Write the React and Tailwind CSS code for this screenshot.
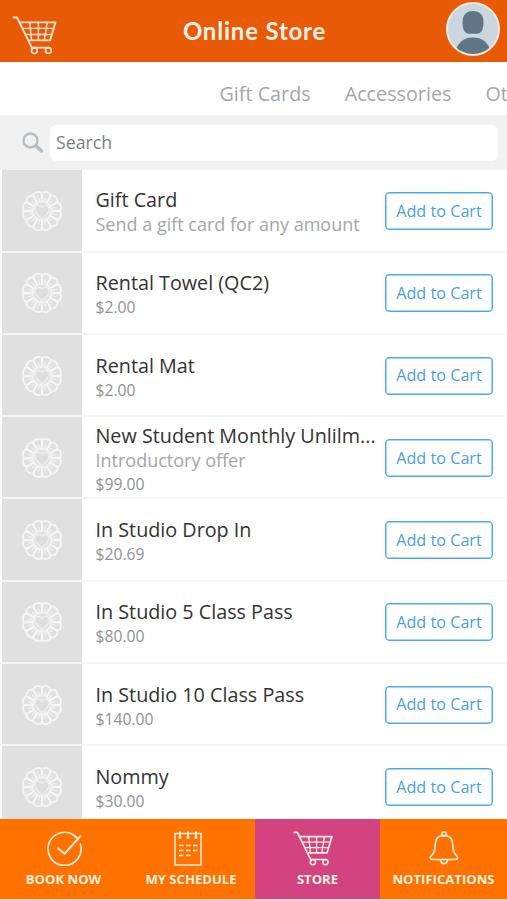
import React from 'react';

const tabs = ['Gift Cards', 'Accessories', 'Ot'];

const products = [
  { name: 'Gift Card', note: 'Send a gift card for any amount' },
  { name: 'Rental Towel (QC2)', price: '$2.00' },
  { name: 'Rental Mat', price: '$2.00' },
  { name: 'New Student Monthly Unlilm...', note: 'Introductory offer', price: '$99.00' },
  { name: 'In Studio Drop In', price: '$20.69' },
  { name: 'In Studio 5 Class Pass', price: '$80.00' },
  { name: 'In Studio 10 Class Pass', price: '$140.00' },
  { name: 'Nommy', price: '$30.00' },
];

const petals = [15, 45, 75, 105, 135, 165, 195, 225, 255, 285, 315, 345];

const CartIcon = ({ className }) => (
  <svg viewBox="0 0 46 40" className={className} fill="none" stroke="currentColor" strokeLinecap="round" strokeLinejoin="round">
    <path strokeWidth="1.9" d="M1 1.500h3.500L20.500 34M7.500 6.500H44L38.500 25H17" />
    <path strokeWidth="1.5" d="M11 12.700H42M13.500 18.900H40M17.500 6.500l2 18.500M26.500 6.500V25M35.500 6.500L32.500 25" />
    <path strokeWidth="1.7" d="M20.500 32.500H37" />
    <circle cx="22.300" cy="35.500" r="3" strokeWidth="1.700" />
    <circle cx="36.700" cy="35.500" r="3" strokeWidth="1.700" />
  </svg>
);

const BookIcon = ({ className }) => (
  <svg viewBox="0 0 36 36" className={className} fill="none" stroke="currentColor" strokeWidth="1.7" strokeLinecap="round" strokeLinejoin="round">
    <path d="M28.500 5A17 17 0 1 0 34.300 13.500" />
    <path strokeWidth="2" d="M11.500 18l6.500 5.500L34.500 5M28.500 5L30.500 7" />
  </svg>
);

const ScheduleIcon = ({ className }) => (
  <svg viewBox="0 0 28 35" className={className} fill="none" stroke="currentColor" strokeWidth="1.5">
    <path d="M1 2.500h26v31.500H1z" />
    <path strokeWidth="2" strokeLinecap="round" d="M6 1.200v5M14 1.200v5M22 1.200v5" />
    <path strokeWidth="3" strokeLinecap="round" d="M6 6.200v.2M14 6.200v.2M22 6.200v.2" />
    <path strokeWidth="1.700" d="M5 14.500h4.500M12 14.500h4.500M19 14.500h4.500M5 19.500h4.500M12 19.500h4.500M19 19.500h4.500M5 24.500h4.500M12 24.500h4.500" />
  </svg>
);

const BellIcon = ({ className }) => (
  <svg viewBox="0 0 30 35" className={className} fill="none" stroke="currentColor" strokeWidth="1.6" strokeLinejoin="round">
    <path d="M15 4.500C9 4.500 6.500 8 6.300 13C6 20 5 22.500 1.500 25.500C.8 27.500 2 28.500 4 28.500H26C28 28.500 29.200 27.500 28.500 25.500C25 22.500 24 20 23.700 13C23.500 8 21 4.500 15 4.500Z" />
    <circle cx="15" cy="3" r="2.200" />
    <path d="M11.300 28.500a3.800 5.300 0 0 0 7.400 0" />
  </svg>
);

const FlowerLogo = () => (
  <svg viewBox="-20.500 -20.500 41 41" className="mt-px h-[42px] w-[42px] text-[#f6f6f6]" fill="none" stroke="currentColor">
    {petals.map((angle) => (
      <g key={angle} transform={`rotate(${angle})`}>
        <path d="M-2.200 -9L-4.500 -17A5.500 5 0 0 1 4.500 -17L2.200 -9" strokeWidth="1.800" />
        <path d="M0 -9.500V-13.500" strokeWidth="1.100" />
      </g>
    ))}
    <circle r="9" strokeWidth="2" strokeOpacity=".75" />
    <path fill="#dedede" strokeWidth="1.300" strokeOpacity=".7" d="M0 7.500C-3 5-7 1.500-7-1.800C-7-5.500-2.500-6.800 0-3.500C2.500-6.800 7-5.500 7-1.800C7 1.500 3 5 0 7.500Z" />
  </svg>
);

const Avatar = () => (
  <div className="h-[54px] w-[54px] overflow-hidden rounded-full border-2 border-[#f5e9e4] bg-[#cbd6df]">
    <svg viewBox="0 0 50 50" className="h-full w-full" fill="#607685">
      <path d="M25 7C18 7 14.500 11.500 14.500 18C14.500 26 17 29.800 21 29.800H29C33 29.800 35.500 26 35.500 18C35.500 11.500 32 7 25 7Z" />
      <path d="M7 48C10 38 16 33.500 25 33.500S40 38 43 48V52H7Z" />
    </svg>
  </div>
);

const ProductRow = ({ name, note, price }) => (
  <li className="flex h-[82.250px] shrink-0 items-center border-b-2 border-[#f4f5f5]">
    <div className="ml-0.5 flex h-full w-20 shrink-0 items-center justify-center bg-[#e0e0e0]">
      <FlowerLogo />
    </div>
    <div className="ml-[13.500px] min-w-0 flex-1 whitespace-nowrap pt-[3px]">
      <h2 className="text-[19.750px] leading-[26px] text-[#333]">{name}</h2>
      {note && <p className="-mt-px text-[18px] leading-[25px] text-[#a2a7a9]">{note}</p>}
      {price && <p className="text-[15.700px] leading-[22px] text-[#8f9294]">{price}</p>}
    </div>
    <button className="mr-3.5 mt-px h-[38px] w-[108px] shrink-0 whitespace-nowrap rounded-[4px] border border-[#4eaaec] text-[16.200px] text-[#4a9fe2] shadow-[inset_0_0_0_0.5px_#4eaaec]">
      Add to Cart
    </button>
  </li>
);

const navItems = [
  { label: 'BOOK NOW', icon: BookIcon, size: 'ml-px h-[35px] w-[35px]' },
  { label: 'MY SCHEDULE', icon: ScheduleIcon, size: 'mr-[7px] h-[35px] w-[28px]' },
  { label: 'STORE', icon: CartIcon, size: 'mr-[9px] h-[35px] w-[41px]', active: true },
  { label: 'NOTIFICATIONS', icon: BellIcon, size: 'h-[35px] w-[30px]' },
];

function NavItem({ label, icon: Icon, size, active }) {
  return (
    <div className={`flex flex-col items-center whitespace-nowrap pt-3 text-[#fff0df] ${active ? 'bg-[#d2437f]' : ''}`}>
      <Icon className={size} />
      <span className="mt-[3px] text-[13.100px] font-bold leading-5">{label}</span>
    </div>
  );
}

export default function App() {
  return (
    <div className="flex h-[900px] w-[507px] flex-col overflow-hidden bg-white font-['Open_Sans','Noto_Sans',sans-serif]">
      <header className="grid h-[61.500px] shrink-0 grid-cols-[1fr_auto_1fr] items-center bg-[#e95a06] pl-3 pr-[7px]">
        <CartIcon className="mt-[9px] h-[39px] w-[46px] text-[#fde3d0]" />
        <h1 className="-ml-[3px] font-['Lato',sans-serif] text-[24px] font-bold tracking-[0.8px] text-[#fff1e6]">Online Store</h1>
        <div className="-mt-1 justify-self-end"><Avatar /></div>
      </header>

      <nav className="flex h-[53.500px] shrink-0 items-center gap-[34px] whitespace-nowrap pl-[219.500px] pt-[11px] text-[19.750px] text-[#a3a7aa]">
        {tabs.map((tab) => <span key={tab}>{tab}</span>)}
      </nav>

      <div className="flex h-[55.400px] shrink-0 items-center bg-[#f1f1f1] pl-[22px] pr-[9px]">
        <svg viewBox="0 0 22 22" className="h-[22px] w-[22px]" fill="none" stroke="#b5bfc3">
          <circle cx="8.500" cy="8.500" r="7" strokeWidth="2.400" />
          <path d="M13.800 13.800l5.700 5.200" strokeWidth="3.500" strokeLinecap="round" />
        </svg>
        <div className="ml-1.5 flex h-9 flex-1 items-center rounded-md bg-white pl-1.5 text-[17.700px] text-[#7c7f80]">Search</div>
      </div>

      <ul className="flex min-h-0 flex-1 flex-col overflow-hidden">
        {products.map((product) => <ProductRow key={product.name} {...product} />)}
      </ul>

      <footer className="grid h-[81px] shrink-0 grid-cols-[127px_128px_125px_127px] border-b border-[#ffe3cc] bg-[#ff7200]">
        {navItems.map((item) => <NavItem key={item.label} {...item} />)}
      </footer>
    </div>
  );
}
